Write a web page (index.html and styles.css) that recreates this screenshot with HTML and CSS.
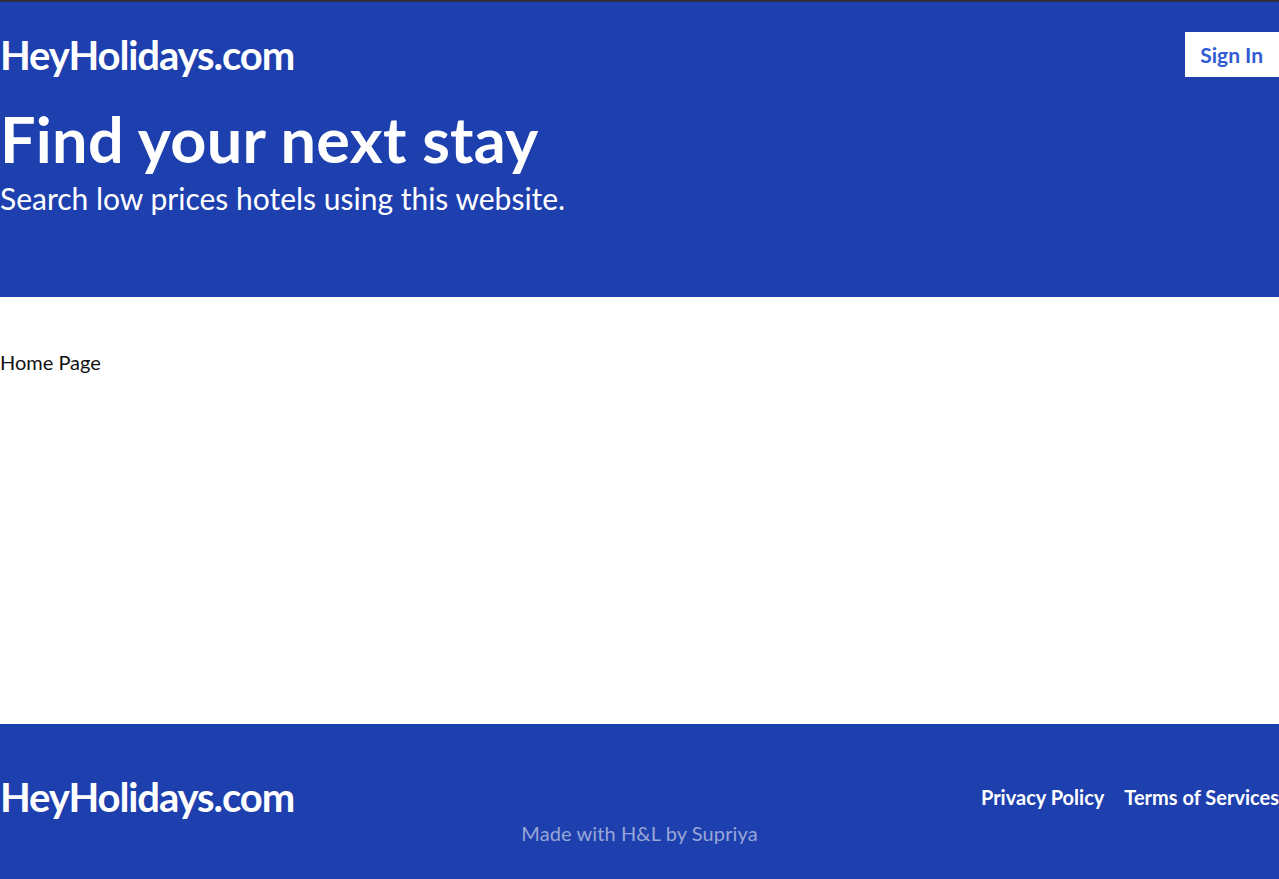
FILE: index.html
```html
<!DOCTYPE html>
<html lang="en">
<head>
<meta charset="utf-8">
<title>HeyHolidays.com</title>
<link rel="stylesheet" href="styles.css">
</head>
<body>
<div class="page">
  <header class="header">
    <div class="nav">
      <span class="logo">HeyHolidays.com</span>
      <a class="signin" href="#">Sign In</a>
    </div>
    <div class="hero">
      <h1 class="hero-title">Find your next stay</h1>
      <p class="hero-sub">Search low prices hotels using this website.</p>
    </div>
  </header>
  <main class="main">
    <p class="home">Home Page</p>
  </main>
  <footer class="footer">
    <div class="footer-row">
      <span class="logo">HeyHolidays.com</span>
      <nav class="footer-links">
        <a href="#">Privacy Policy</a>
        <a href="#">Terms of Services</a>
      </nav>
    </div>
    <p class="made">Made with H&amp;L by Supriya</p>
  </footer>
</div>
</body>
</html>
```

FILE: styles.css
```css
* { box-sizing: border-box; }
html, body { margin: 0; padding: 0; }
body {
  font-family: Lato, "Open Sans", sans-serif;
  color: #111;
  background: #fff;
}
.page {
  min-height: 100vh;
  display: flex;
  flex-direction: column;
  border-top: 2px solid #2e2f38;
}
.header {
  background: #1e40af;
  padding-top: 30px;
  padding-bottom: 81px;
}
.nav {
  display: flex;
  justify-content: space-between;
  align-items: center;
  height: 45px;
}
.logo {
  color: #fff;
  font-weight: 700;
  font-size: 40px;
  line-height: 50px;
  letter-spacing: -1.1px;
}
.signin {
  display: flex;
  align-items: center;
  height: 45px;
  padding: 0 16px 0 15px;
  background: #fff;
  color: #2f5bd3;
  font-weight: 700;
  font-size: 21px;
  text-decoration: none;
}
.hero { margin-top: 24px; color: #fff; }
.hero-title {
  margin: 0;
  font-size: 63px;
  line-height: 76px;
  font-weight: 700;
  letter-spacing: 0.25px;
}
.hero-sub {
  margin: 3px 0 0;
  font-size: 30px;
  line-height: 36px;
}
.main {
  flex: 1;
  padding-top: 53px;
}
.home {
  margin: 0;
  font-size: 20px;
  line-height: 24px;
}
.footer {
  background: #1e40af;
  padding: 48px 0 34px;
}
.footer-row {
  display: flex;
  justify-content: space-between;
  align-items: center;
  height: 50px;
}
.footer-links {
  display: flex;
  gap: 20px;
}
.footer-links a {
  color: #fff;
  font-weight: 700;
  font-size: 20px;
  text-decoration: none;
}
.made {
  margin: 0;
  text-align: center;
  color: #98a6d6;
  font-size: 20px;
  line-height: 23px;
  letter-spacing: 0.1px;
}
```
